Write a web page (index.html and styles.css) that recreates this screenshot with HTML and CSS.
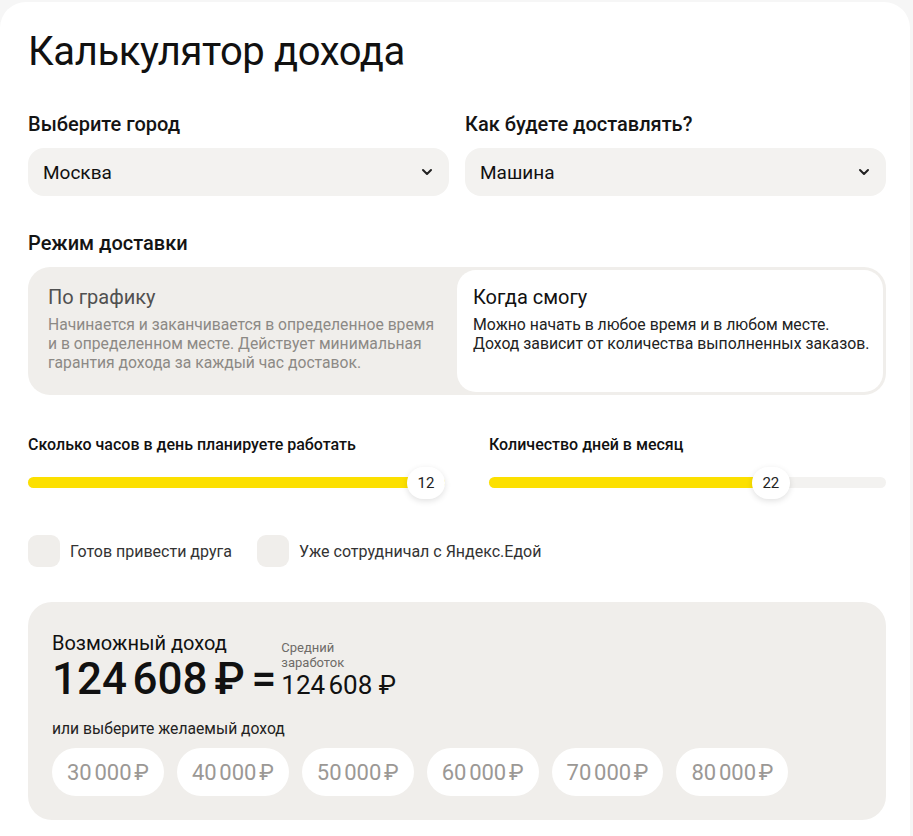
FILE: index.html
```html
<!DOCTYPE html>
<html lang="ru">
<head>
<meta charset="utf-8">
<title>Калькулятор дохода</title>
<link rel="stylesheet" href="styles.css">
</head>
<body>
<div class="card">
  <h1 class="title">Калькулятор дохода</h1>

  <div class="row2">
    <div class="field">
      <div class="label">Выберите город</div>
      <div class="select"><span>Москва</span>
        <svg class="chev" width="12" height="8" viewBox="0 0 12 8"><path d="M2 2l4 4 4-4" fill="none" stroke="#222" stroke-width="2" stroke-linecap="round" stroke-linejoin="round"/></svg>
      </div>
    </div>
    <div class="field">
      <div class="label">Как будете доставлять?</div>
      <div class="select"><span>Машина</span>
        <svg class="chev" width="12" height="8" viewBox="0 0 12 8"><path d="M2 2l4 4 4-4" fill="none" stroke="#222" stroke-width="2" stroke-linecap="round" stroke-linejoin="round"/></svg>
      </div>
    </div>
  </div>

  <div class="label mode-label">Режим доставки</div>
  <div class="modes">
    <div class="mode">
      <div class="mode-title">По графику</div>
      <div class="mode-desc">Начинается и заканчивается в определенное время и в определенном месте. Действует минимальная гарантия дохода за каждый час доставок.</div>
    </div>
    <div class="mode active">
      <div class="mode-title">Когда смогу</div>
      <div class="mode-desc">Можно начать в любое время и в любом месте.<br>Доход зависит от количества выполненных заказов.</div>
    </div>
  </div>

  <div class="sliders">
    <div class="slider first">
      <div class="slabel">Сколько часов в день планируете работать</div>
      <div class="track"><div class="fill" style="width:100%"></div><div class="thumb" style="left:100%">12</div></div>
    </div>
    <div class="slider">
      <div class="slabel">Количество дней в месяц</div>
      <div class="track"><div class="fill" style="width:71%"></div><div class="thumb" style="left:71%">22</div></div>
    </div>
  </div>

  <div class="checks">
    <label class="check"><span class="box"></span>Готов привести друга</label>
    <label class="check"><span class="box"></span>Уже сотрудничал с Яндекс.Едой</label>
  </div>

  <div class="income">
    <div class="income-top">
      <div class="income-main">
        <div class="income-label">Возможный доход</div>
        <div class="income-value">124&#8239;608 ₽ =</div>
      </div>
      <div class="income-avg">
        <div class="avg-label">Средний<br>заработок</div>
        <div class="avg-value">124&#8239;608 ₽</div>
      </div>
    </div>
    <div class="choose">или выберите желаемый доход</div>
    <div class="chips">
      <span class="chip">30&#8239;000&#8239;₽</span>
      <span class="chip">40&#8239;000&#8239;₽</span>
      <span class="chip">50&#8239;000&#8239;₽</span>
      <span class="chip">60&#8239;000&#8239;₽</span>
      <span class="chip">70&#8239;000&#8239;₽</span>
      <span class="chip">80&#8239;000&#8239;₽</span>
    </div>
  </div>
</div>
</body>
</html>
```

FILE: styles.css
```css
* { box-sizing: border-box; }
html, body { margin: 0; padding: 0; }
body {
  background: #f6f6f6;
  font-family: Roboto, "Noto Sans", sans-serif;
  color: #111;
  overflow: hidden;
  height: 836px;
}
.card {
  background: #fff;
  margin: 2px 3px 0 0;
  border-radius: 26px 26px 0 0;
  padding: 26px 24px 0 28px;
  min-height: 900px;
}
.title {
  margin: 0;
  font-size: 40px;
  font-weight: 400;
  line-height: 48px;
  letter-spacing: -0.4px;
}
.row2 {
  display: grid;
  grid-template-columns: 1fr 1fr;
  gap: 16px;
  margin-top: 36px;
}
.label {
  font-size: 20px;
  font-weight: 500;
  line-height: 24px;
  margin-bottom: 12px;
  color: #141414;
}
.select {
  height: 48px;
  background: #f3f2f0;
  border-radius: 16px;
  display: flex;
  align-items: center;
  justify-content: space-between;
  padding: 0 16px 0 15px;
  font-size: 19px;
}
.mode-label { margin-top: 35px; margin-bottom: 12px; }
.modes {
  display: grid;
  grid-template-columns: 1fr 1fr;
  background: #f0eeeb;
  border-radius: 22px;
  padding: 3px;
  height: 128px;
}
.mode {
  padding: 15px 12px 15px 17px;
  border-radius: 19px;
}
.mode.active { background: #fff; padding-left: 16px; padding-right: 8px; }
.mode-title {
  font-size: 20px;
  line-height: 24px;
  color: #505050;
  margin-bottom: 6px;
}
.mode.active .mode-title { color: #111; }
.mode-desc {
  font-size: 15.7px;
  line-height: 19px;
  color: #8c8985;
}
.mode.active .mode-desc { color: #222; font-size: 15.8px; white-space: nowrap; }
.sliders {
  display: grid;
  grid-template-columns: 417px 1fr;
  gap: 44px;
  margin-top: 40px;
}
.slabel {
  font-size: 16px;
  font-weight: 500;
  line-height: 20px;
}
.track {
  position: relative;
  height: 11px;
  background: #f3f2f0;
  border-radius: 6px;
  margin-top: 22px;
}
.fill {
  height: 100%;
  background: #fce000;
  border-radius: 6px;
}
.thumb {
  position: absolute;
  top: 50%;
  transform: translate(-50%, -50%);
  width: 38px;
  height: 32px;
  border-radius: 16px;
  background: #fff;
  box-shadow: 0 2px 6px rgba(0,0,0,0.12);
  display: flex;
  align-items: center;
  justify-content: center;
  font-size: 15px;
  color: #222;
}
.slider.first .thumb { transform: translate(-100%, -50%); }
.checks {
  display: flex;
  gap: 25px;
  margin-top: 47px;
}
.check {
  display: flex;
  align-items: center;
  gap: 10px;
  font-size: 16px;
  color: #333;
}
.box {
  width: 32px;
  height: 32px;
  border-radius: 9px;
  background: #f0eeeb;
}
.income {
  margin-top: 35px;
  background: #f0eeeb;
  border-radius: 24px;
  padding: 30px 24px 24px 24px;
  height: 218px;
}
.income-top {
  display: flex;
  align-items: flex-end;
  gap: 5px;
}
.income-label {
  font-size: 20px;
  line-height: 22px;
  color: #111;
}
.income-value {
  font-size: 44px;
  font-weight: 500;
  line-height: 50px;
  letter-spacing: -3px;
  word-spacing: -4px;
}
.avg-label {
  font-size: 13px;
  line-height: 15px;
  color: #6e6b68;
}
.avg-value {
  font-size: 26px;
  line-height: 30px;
  margin-bottom: 4px;
  letter-spacing: -0.6px;
}
.choose {
  font-size: 15.7px;
  color: #222;
  margin-top: 15px;
  line-height: 20px;
}
.chips {
  display: flex;
  gap: 13px;
  margin-top: 9px;
}
.chip {
  height: 48px;
  border-radius: 24px;
  background: #fff;
  display: flex;
  align-items: center;
  padding: 0 15px;
  font-size: 22px;
  color: #9b9895;
  letter-spacing: -0.4px;
}
```
